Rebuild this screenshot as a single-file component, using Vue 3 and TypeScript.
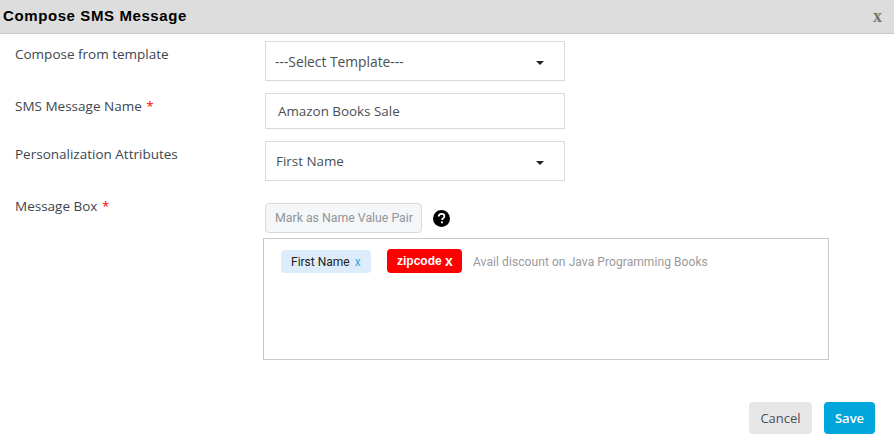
<script setup lang="ts">
const title = 'Compose SMS Message'
</script>

<template>
  <div class="dialog">
    <header class="head">
      <span class="title">{{ title }}</span>
      <span class="close">x</span>
    </header>
    <div class="form">
      <div class="row first">
        <label class="lbl">Compose from template</label>
        <div class="field select">
          <span class="wide">---Select Template---</span><i class="caret"></i>
        </div>
      </div>
      <div class="row">
        <label class="lbl">SMS Message Name <b class="req">*</b></label>
        <div class="field input"><span>Amazon Books Sale</span></div>
      </div>
      <div class="row">
        <label class="lbl">Personalization Attributes</label>
        <div class="field select">
          <span>First Name</span><i class="caret"></i>
        </div>
      </div>
      <div class="row">
        <label class="lbl">Message Box <b class="req">*</b></label>
        <div class="msgcol">
          <div class="tools">
            <button class="mark">Mark as Name Value Pair</button>
            <svg class="help" width="17" height="17" viewBox="0 0 16 16">
              <circle cx="8" cy="8" r="8" fill="#000" />
              <path d="M5.4 6.2c0-1.6 1.1-2.6 2.7-2.6 1.5 0 2.6.9 2.6 2.2 0 1-.5 1.5-1.3 2.1-.7.5-.9.8-.9 1.5" fill="none" stroke="#fff" stroke-width="1.7" />
              <rect x="7.5" y="10.7" width="1.8" height="1.8" fill="#fff" />
            </svg>
          </div>
          <div class="box">
            <span class="tag blue">First Name <em>x</em></span>
            <span class="tag red">zipcode <em>x</em></span>
            <span class="plain">Avail discount on Java Programming Books</span>
          </div>
        </div>
      </div>
    </div>
    <footer class="foot">
      <button class="btn cancel">Cancel</button>
      <button class="btn save">Save</button>
    </footer>
  </div>
</template>

<style scoped>
.dialog {
  width: 894px;
  height: 445px;
  background: #fff;
  display: flex;
  flex-direction: column;
  font-family: "Open Sans", "Noto Sans", sans-serif;
  color: #444;
  overflow: hidden;
}
.head {
  box-sizing: content-box;
  height: 31px;
  background: #dddddd;
  border-bottom: 1px solid #c8c8c8;
  display: flex;
  align-items: center;
  justify-content: space-between;
  padding: 0 12px 2px 3px;
}
.title {
  font: bold 15px "Liberation Sans", Arial, sans-serif;
  letter-spacing: 0.6px;
  color: #000;
}
.close {
  font: bold 18px "Liberation Serif", serif;
  line-height: 18px;
  color: #777;
}
.form {
  display: flex;
  flex-direction: column;
  gap: 12px;
  padding-top: 7px;
}
.row {
  display: flex;
  align-items: flex-start;
}
.lbl {
  width: 250px;
  margin-left: 15px;
  font-size: 13.5px;
  line-height: 18px;
  color: #3d4650;
  padding-top: 4px;
}
.req {
  color: #ff0000;
  font-weight: 400;
  margin-left: 1px;
}
.field {
  width: 300px;
  box-sizing: border-box;
  border: 1px solid #d5dbe0;
  font-size: 13.4px;
  color: #4a4f55;
  display: flex;
  align-items: center;
  justify-content: space-between;
}
.wide {
  font-size: 13.8px;
  margin-left: -1px;
}
.select {
  height: 40px;
  padding: 0 20px 0 10px;
}
.input {
  height: 36px;
  padding: 0 12px;
}
.caret {
  width: 0;
  height: 0;
  border-left: 4.5px solid transparent;
  border-right: 4.5px solid transparent;
  border-top: 4.5px solid #222;
  margin-top: 3px;
}
.msgcol {
  margin-left: -2px;
  padding-top: 10px;
  display: flex;
  flex-direction: column;
}
.tools {
  display: flex;
  align-items: center;
  gap: 12px;
  padding-left: 2px;
  margin-bottom: 5px;
}
.mark {
  width: 157px;
  height: 30px;
  padding: 0 0 0 1px;
  border: 1px solid #d9d9d9;
  border-radius: 4px;
  background: #f5f6f7;
  color: #8f959b;
  font: 12.3px Roboto, sans-serif;
}
.help {
  display: block;
  margin-left: -1px;
}
.box {
  width: 566px;
  height: 122px;
  box-sizing: border-box;
  border: 1px solid #c8c8c8;
  padding: 10px 17px;
  display: flex;
  align-items: flex-start;
  font-family: Roboto, sans-serif;
}
.tag {
  font-size: 12px;
  border-radius: 4px;
  display: inline-flex;
  align-items: center;
  white-space: pre;
}
.tag em {
  font-style: normal;
}
.blue {
  height: 23px;
  margin-top: 1px;
  width: 90px;
  box-sizing: border-box;
  padding-left: 10px;
  background: #dcecfb;
  color: #222;
}
.blue em {
  color: #3aa7dc;
  margin-left: 2px;
}
.red {
  height: 24px;
  width: 75px;
  box-sizing: border-box;
  padding-left: 10px;
  margin-left: 16px;
  background: #ff0000;
  color: #fff;
  font: bold 12px "Liberation Sans", sans-serif;
}
.red em {
  font-size: 14px;
}
.plain {
  margin-left: 11px;
  margin-top: 1px;
  font-size: 12px;
  line-height: 24px;
  color: #9a9a9a;
  letter-spacing: 0.08px;
}
.foot {
  margin-top: auto;
  display: flex;
  justify-content: flex-end;
  gap: 12px;
  padding: 0 19px 11px 0;
}
.btn {
  height: 32px;
  border: 0;
  border-radius: 4px;
  font: 13px "Open Sans", sans-serif;
  padding: 0;
}
.cancel {
  width: 63px;
  background: #e7e7e7;
  color: #4a4f55;
}
.save {
  width: 51px;
  background: #00a5dc;
  color: #fff;
  font-weight: 600;
}
</style>
